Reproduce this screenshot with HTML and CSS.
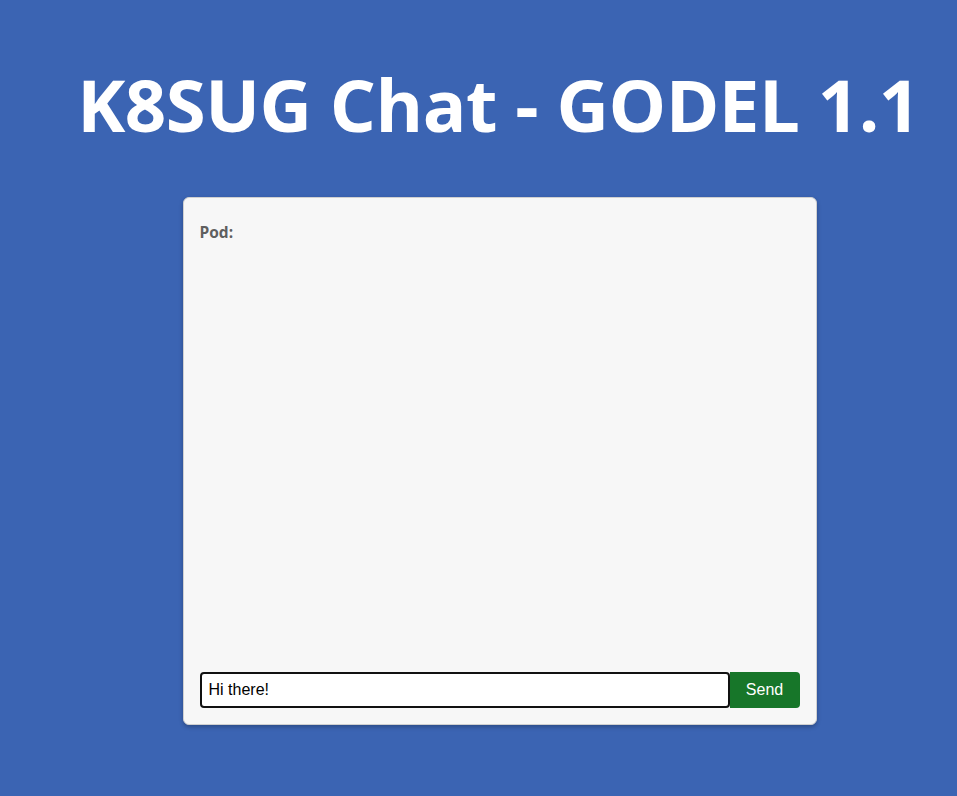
FILE: index.html
```html
<!DOCTYPE html>
<html>
<head>
<meta charset="utf-8">
<link rel="stylesheet" href="styles.css">
</head>
<body>
<div class="page">
  <h1 class="title">K8SUG Chat - GODEL 1.1</h1>
  <div class="card">
    <div class="pod">Pod:</div>
    <div class="messages"></div>
    <form class="composer">
      <input class="msg" type="text" value="Hi there!">
      <button class="send" type="button">Send</button>
    </form>
  </div>
</div>
</body>
</html>
```
FILE: styles.css
```css
html, body {
  margin: 0;
  padding: 0;
  background: #3b64b3;
  height: 100%;
}
.page {
  display: flex;
  flex-direction: column;
  align-items: center;
  font-family: "Open Sans", sans-serif;
}
.title {
  margin: 55px 0 0 40px;
  font-size: 72.5px;
  line-height: 99px;
  font-weight: 700;
  color: #fff;
  letter-spacing: -0.5px;
  white-space: nowrap;
}
.card {
  margin: 43px 0 0 42px;
  width: 600px;
  height: 494px;
  padding: 16px;
  background: #f7f7f7;
  border: 1px solid #d0d0d0;
  border-radius: 6px;
  box-shadow: 0 2px 4px rgba(0,0,0,0.25);
  display: flex;
  flex-direction: column;
}
.pod {
  margin-top: 8px;
  font-size: 15.5px;
  font-weight: 700;
  color: #5f5f5f;
  line-height: 20px;
}
.messages {
  flex: 1;
}
.composer {
  display: flex;
  margin: 0;
}
.msg {
  flex: 1;
  height: 36px;
  box-sizing: border-box;
  border: 2px solid #111;
  border-radius: 4px;
  padding: 0 7px;
  font-family: "Liberation Sans", Arial, sans-serif;
  font-size: 16px;
  color: #000;
  background: #fff;
  outline: none;
}
.send {
  width: 70px;
  height: 36px;
  border: none;
  border-radius: 0 4px 4px 0;
  background: #177629;
  color: #fff;
  font-family: "Liberation Sans", Arial, sans-serif;
  font-size: 16px;
}
```
